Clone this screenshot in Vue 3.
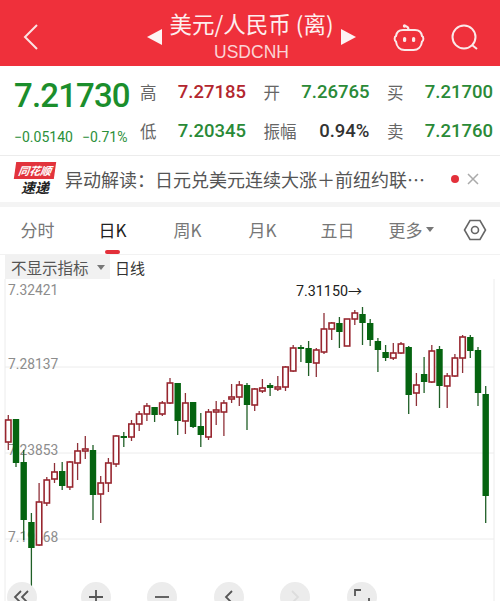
<script setup>
const raw = [
['u',415,450,420,442],['d',419,467,419,463],['d',450,540,462,520],['d',513,587,522,548],['u',483,546,502,545],
['u',477,506,480,503],['u',463,483,472,479],['d',462,490,471,486],['u',461,490,462,487],['u',443,480,451,463],
['u',436,459,449,451],['d',445,520,450,495],['u',476,523,483,494],['u',458,492,463,483],['u',435,467,436,464],
['d',432,447,436,438],['u',420,441,424,437],['u',411,431,414,424],['u',403,421,406,414],['d',407,422,407,415],
['u',401,416,403,414],['u',378,404,383,403],['d',383,435,383,421],['u',393,434,403,421],['d',402,428,402,427],
['d',413,447,426,435],['u',409,440,412,437],['u',401,425,410,412],['u',400,436,403,412],['u',384,403,397,399],
['u',381,406,385,397],['d',383,430,385,405],['u',388,411,389,405],['u',379,393,388,391],['d',383,396,385,388],
['u',376,391,387,389],['u',366,391,367,387],['u',345,372,348,371],['d',345,362,347,349],['d',341,376,348,363],
['u',348,377,350,363],['u',313,354,329,352],['u',322,340,323,329],['d',317,348,323,332],['u',319,346,319,346],
['u',310,325,313,319],['d',307,345,314,323],['d',319,346,323,340],['d',338,372,341,350],['d',345,361,352,358],
['u',343,360,353,358],['u',342,354,344,353],['d',346,414,347,395],['u',373,406,385,393],['d',357,393,374,382],
['u',345,383,351,382],['d',346,408,349,386],['u',373,408,376,386],['u',354,377,358,376],['u',335,373,337,358],
['d',335,358,337,351],['d',347,406,350,393],['d',386,523,394,496]
]
const candles = raw.map((c, i) => {
  const x = +(8.3 + 7.7 * i).toFixed(1)
  const up = c[0] === 'u'
  return { x, up, wt: c[1] - 279, wb: c[2] - 279, top: c[3] - 279, h: Math.max(c[4] - c[3], 1.5) }
})
const quotes = [
  { label: '高', value: '7.27185', tone: 'up' }, { label: '开', value: '7.26765', tone: 'down' }, { label: '买', value: '7.21700', tone: 'down' },
  { label: '低', value: '7.20345', tone: 'down' }, { label: '振幅', value: '0.94%', tone: 'flat' }, { label: '卖', value: '7.21760', tone: 'down' }
]
const tabs = ['分时', '日K', '周K', '月K', '五日']
const grid = [88, 174, 260]
const labels = [{ t: '7.32421', y: 16 }, { t: '7.28137', y: 90 }, { t: '7.23853', y: 176 }, { t: '7.19568', y: 263 }]
</script>

<template>
  <div class="page">
    <header class="head">
      <svg class="back" width="16" height="28" viewBox="0 0 16 28"><path d="M14 2 2 14l12 12" /></svg>
      <div class="title-wrap">
        <span class="tri tri-l"></span>
        <div class="title">
          <div class="name">美元/人民币 (离)</div>
          <div class="code">USDCNH</div>
        </div>
        <span class="tri tri-r"></span>
      </div>
      <div class="head-icons">
        <svg width="32" height="28" viewBox="0 0 32 28">
          <path class="ic" d="M15.500 5.500c0-2-1-3-3-3.500" />
          <circle cx="11.500" cy="2" r="1.700" fill="#fbe9e9" />
          <path class="ic" d="M10 6h12c4 0 6.500 2.500 7 6 1.800.6 1.800 5 0 5.600-.6 5-4 8.400-8.500 8.400h-9C7 26 3.600 22.600 3 17.600c-1.800-.6-1.800-5 0-5.600.5-3.500 3-6 7-6Z" />
          <rect x="10" y="13" width="3.200" height="5" rx="1.600" fill="#fbe9e9" />
          <rect x="19" y="13" width="3.200" height="5" rx="1.600" fill="#fbe9e9" />
        </svg>
        <svg width="28" height="28" viewBox="0 0 28 28">
          <circle class="ic" cx="13" cy="13" r="11.500" />
          <path class="ic" d="m21 21 5 4" />
        </svg>
      </div>
    </header>

    <section class="quote">
      <div class="price">
        <div class="big">7.21730</div>
        <div class="chg"><span>−0.05140</span><span>−0.71%</span></div>
      </div>
      <div class="cells">
        <div v-for="q in quotes" :key="q.label" class="cell">
          <span class="lab">{{ q.label }}</span>
          <span class="val" :class="q.tone">{{ q.value }}</span>
        </div>
      </div>
    </section>

    <section class="news">
      <div class="logo">
        <span class="logo-top">同花顺</span>
        <span class="logo-bot">速递</span>
      </div>
      <div class="news-text">异动解读：日元兑美元连续大涨＋前纽约联…</div>
      <span class="dot"></span>
      <svg class="close" width="12" height="12" viewBox="0 0 12 12"><path d="m1 1 10 10M11 1 1 11" /></svg>
    </section>

    <nav class="tabs">
      <div v-for="t in tabs" :key="t" class="tab" :class="{ on: t === '日K' }">{{ t }}</div>
      <div class="tab more">更多<i class="caret"></i></div>
      <div class="tab hex">
        <svg width="24" height="22" viewBox="0 0 24 22"><path d="M7 1.500h10l5.500 9.500-5.500 9.500H7L1.500 11Z" /><circle cx="12" cy="11" r="3.500" /></svg>
      </div>
    </nav>

    <div class="ind">
      <div class="ind-btn">不显示指标<i class="caret small"></i></div>
      <span class="ind-name">日线</span>
    </div>

    <div class="chart">
      <svg class="plot" width="500" height="322" viewBox="0 0 500 322">
        <line v-for="y in grid" :key="y" class="grid" x1="5" x2="494" :y1="y" :y2="y" />
        <line class="grid" x1="5" x2="5" y1="0" y2="322" />
        <line class="grid" x1="494" x2="494" y1="0" y2="322" />
        <text v-for="l in labels" :key="l.t" class="axis" x="8" :y="l.y">{{ l.t }}</text>
        <text class="peak" x="296" y="17">7.31150<tspan class="arrow">→</tspan></text>
        <g v-for="c in candles" :key="c.x">
          <line :class="c.up ? 'wick-u' : 'wick-d'" :x1="c.x" :x2="c.x" :y1="c.wt" :y2="c.wb" />
          <rect v-if="c.up" class="body-u" :x="c.x - 2.700" :y="c.top" width="5.400" :height="c.h" />
          <rect v-else class="body-d" :x="c.x - 3.200" :y="c.top" width="6.400" :height="c.h" />
        </g>
      </svg>
      <div class="tools">
        <button class="tool first"><svg width="30" height="30" viewBox="0 0 30 30"><path d="M14 9 8 15l6 6M21 9l-6 6 6 6" /></svg></button>
        <button class="tool"><svg width="30" height="30" viewBox="0 0 30 30"><path d="M15 8v14M8 15h14" /></svg></button>
        <button class="tool"><svg width="30" height="30" viewBox="0 0 30 30"><path d="M8 15h14" /></svg></button>
        <button class="tool"><svg width="30" height="30" viewBox="0 0 30 30"><path d="m18 9-6 6 6 6" /></svg></button>
        <button class="tool faint"><svg width="30" height="30" viewBox="0 0 30 30"><path d="m12 9 6 6-6 6" /></svg></button>
        <button class="tool"><svg width="30" height="30" viewBox="0 0 30 30"><path d="M14 8H8v6M22 16v6h-6" /></svg></button>
      </div>
    </div>
  </div>
</template>

<style scoped>
.page { width: 500px; height: 601px; overflow: hidden; display: flex; flex-direction: column; background: #fff; font-family: Roboto, "Noto Sans CJK SC", sans-serif; color: #333; }
.head { height: 66px; flex: none; background: #ef303b; display: flex; align-items: center; position: relative; color: #fdeeee; box-sizing: border-box; }
.back { margin-left: 23px; margin-top: 8px; }
.back path { fill: none; stroke: #fbe3e3; stroke-width: 2; }
.title-wrap { position: absolute; left: 0; right: 0; top: 0; display: flex; justify-content: center; align-items: center; gap: 6px; height: 66px; padding-left: 3px; }
.title { text-align: center; width: 167px; }
.name { font-size: 22.500px; line-height: 24px; margin-top: 7px; white-space: nowrap; font-family: "Noto Sans CJK SC", sans-serif; }
.code { font-size: 17.500px; line-height: 20px; margin-top: 7px; color: #fbd4d6; font-family: "Liberation Sans", sans-serif; }
.tri { width: 0; height: 0; border-top: 8px solid transparent; border-bottom: 8px solid transparent; margin-top: 8px; }
.tri-l { border-right: 15px solid #fdf3f3; }
.tri-r { border-left: 15px solid #fdf3f3; }
.head-icons { position: absolute; left: 393px; top: 24px; display: flex; gap: 26px; }
.ic { fill: none; stroke: #fbe9e9; stroke-width: 2; }

.quote { height: 90px; flex: none; display: flex; box-sizing: border-box; border-bottom: 1px solid #ececec; }
.price { width: 140px; flex: none; box-sizing: border-box; padding: 10px 0 0 14px; }
.big { font-size: 33px; line-height: 38px; font-weight: 500; color: #1b8e2c; margin-top: 1px; letter-spacing: -.85px; }
.chg { display: flex; gap: 9px; font-size: 14px; line-height: 18px; color: #2b8f3a; margin-top: 13px; white-space: nowrap; }
.cells { flex: 1; display: grid; grid-template-columns: repeat(3, 106px); grid-auto-rows: 39px; column-gap: 17.500px; padding-top: 6px; }
.cell { display: flex; justify-content: space-between; align-items: center; }
.lab { font-size: 16.500px; color: #666; font-family: "Noto Sans CJK SC", sans-serif; }
.val { font-size: 18.500px; font-weight: 500; }
.up { color: #b3262e; }
.down { color: #2a8a37; }
.flat { color: #333; }

.news { height: 46px; flex: none; display: flex; align-items: center; border-bottom: 5px solid #f4f4f4; }
.logo { width: 40px; margin-left: 15px; display: flex; flex-direction: column; align-items: center; font-style: italic; font-weight: 700; font-family: "Noto Sans CJK SC", sans-serif; }
.logo-top { background: #e2333c; color: #fff; font-size: 11px; line-height: 17px; padding: 0 3px; width: 34px; text-align: center; white-space: nowrap; transform: skewX(-8deg); }
.logo-bot { color: #222; font-size: 14px; line-height: 17px; }
.news-text { margin-left: 10px; font-size: 18px; color: #555; white-space: nowrap; font-family: "Noto Sans CJK SC", sans-serif; width: 376px; overflow: hidden; }
.dot { width: 8px; height: 8px; border-radius: 50%; background: #e3303a; margin-left: 10px; flex: none; }
.close { margin-left: 8px; flex: none; }
.close path { stroke: #aaa; stroke-width: 1.500; fill: none; }

.tabs { height: 48px; flex: none; display: grid; grid-template-columns: repeat(6, 75px) 1fr; border-bottom: 1px solid #f2f2f2; box-sizing: border-box; }
.tab { display: flex; align-items: center; justify-content: center; position: relative; font-size: 17px; color: #777; padding-bottom: 2px; font-family: "Noto Sans CJK SC", sans-serif; }
.tab.on { color: #222; }
.tab.on::after { content: ""; position: absolute; left: 30px; bottom: 0; width: 15px; height: 4px; border-radius: 2px; background: #e3303a; }
.more { padding-right: 3px; }
.caret { display: inline-block; width: 0; height: 0; border-left: 4px solid transparent; border-right: 4px solid transparent; border-top: 5px solid #777; margin-left: 3px; }
.caret.small { margin-left: 8px; }
.hex svg { fill: none; stroke: #666; stroke-width: 1.600; }

.ind { height: 24px; flex: none; display: flex; align-items: center; padding-left: 5px; }
.ind-btn { width: 105px; height: 24px; box-sizing: border-box; background: #f1f1f1; font-size: 15.500px; color: #555; padding-left: 6px; display: flex; align-items: center; white-space: nowrap; font-family: "Noto Sans CJK SC", sans-serif; }
.ind-name { margin-left: 5px; font-size: 15px; color: #333; font-family: "Noto Sans CJK SC", sans-serif; }

.chart { flex: 1; position: relative; overflow: hidden; }
.plot { display: block; }
.grid { stroke: #ececec; stroke-width: 1; }
.axis { font-size: 13.800px; fill: #8c8c8c; font-family: Roboto, sans-serif; }
.peak { font-size: 14.300px; fill: #222; font-family: Roboto, sans-serif; }
.arrow { font-family: "Noto Sans CJK SC", sans-serif; font-size: 14px; }
.wick-u { stroke: #8f3038; stroke-width: 1.300; }
.wick-d { stroke: #1f5f26; stroke-width: 1.300; }
.body-u { fill: #fff; stroke: #98262f; stroke-width: 1.600; }
.body-d { fill: #056410; }

.tools { position: absolute; left: 7px; top: 303px; display: flex; gap: 36.600px; }
.tool { width: 30px; height: 30px; padding: 0; border: 0; border-radius: 50%; background: #ececec; flex: none; }
.tool.first { margin-right: 7px; }
.tool svg { display: block; fill: none; stroke: #555; stroke-width: 1.800; }
.tool.faint svg { stroke: #ddd; }
</style>
